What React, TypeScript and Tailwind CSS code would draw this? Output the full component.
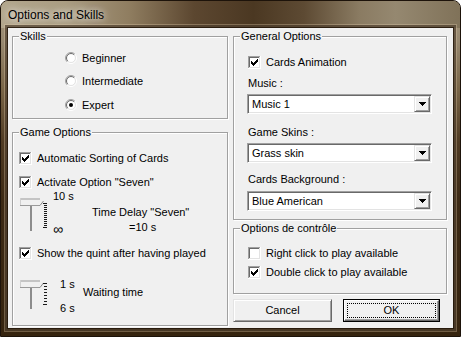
import React from "react";

function Check({ checked }: { checked: boolean }) {
  const offs = [2, 3, 4, 3, 2, 1, 0];
  return (
    <svg width="13" height="13" viewBox="0 0 13 13" shapeRendering="crispEdges" className="shrink-0">
      <rect x="0" y="0" width="13" height="13" fill="#ffffff" />
      <rect x="0" y="0" width="12" height="1" fill="#a0a0a0" />
      <rect x="0" y="0" width="1" height="12" fill="#a0a0a0" />
      <rect x="1" y="1" width="10" height="1" fill="#696969" />
      <rect x="1" y="1" width="1" height="10" fill="#696969" />
      <rect x="1" y="11" width="11" height="1" fill="#e3e3e3" />
      <rect x="11" y="1" width="1" height="11" fill="#e3e3e3" />
      {checked &&
        offs.map((o, i) => <rect key={i} x={3 + i} y={3 + o} width="1" height="3" fill="#000" />)}
    </svg>
  );
}

function Radio({ checked }: { checked: boolean }) {
  const arc = (r: number, c1: string, c2: string) => {
    const d = r * Math.SQRT1_2;
    return (
      <>
        <path d={`M ${6 - d} ${6 + d} A ${r} ${r} 0 0 1 ${6 + d} ${6 - d}`} stroke={c1} fill="none" />
        <path d={`M ${6 + d} ${6 - d} A ${r} ${r} 0 0 1 ${6 - d} ${6 + d}`} stroke={c2} fill="none" />
      </>
    );
  };
  return (
    <svg width="12" height="12" viewBox="0 0 12 12" className="shrink-0">
      <circle cx="6" cy="6" r="4.2" fill="#ffffff" />
      {arc(5.5, "#a0a0a0", "#ffffff")}
      {arc(4.5, "#696969", "#e3e3e3")}
      {checked && <circle cx="6" cy="6" r="2" fill="#000" />}
    </svg>
  );
}

function CheckRow({ label, checked, className = "" }: { label: string; checked: boolean; className?: string }) {
  return (
    <div className={`flex items-center h-[16px] gap-[5px] ${className}`}>
      <Check checked={checked} />
      <span className="whitespace-nowrap">{label}</span>
    </div>
  );
}

function RadioRow({ label, checked, className = "" }: { label: string; checked: boolean; className?: string }) {
  return (
    <div className={`flex items-center h-[16px] gap-[5px] pl-[52px] ${className}`}>
      <Radio checked={checked} />
      <span className="whitespace-nowrap">{label}</span>
    </div>
  );
}

function Combo({ value, className = "" }: { value: string; className?: string }) {
  return (
    <div
      className={`h-[20px] w-[185px] flex items-stretch p-[1px] bg-white border border-[#a0a0a0] border-r-white border-b-white shadow-[inset_1px_1px_0_#696969,inset_-1px_-1px_0_#e3e3e3] ${className}`}
    >
      <span className="flex-1 pl-[3px] flex items-center whitespace-nowrap">{value}</span>
      <div className="w-[16px] flex items-center justify-center bg-[#f0f0f0] border border-[#e3e3e3] border-r-[#696969] border-b-[#696969] shadow-[inset_1px_1px_0_#ffffff,inset_-1px_-1px_0_#a0a0a0]">
        <svg width="7" height="4" viewBox="0 0 7 4" shapeRendering="crispEdges">
          <rect x="0" y="0" width="7" height="1" fill="#000" />
          <rect x="1" y="1" width="5" height="1" fill="#000" />
          <rect x="2" y="2" width="3" height="1" fill="#000" />
          <rect x="3" y="3" width="1" height="1" fill="#000" />
        </svg>
      </div>
    </div>
  );
}

function Slider({
  h,
  thumbTop,
  trackEnd,
  ticks,
}: {
  h: number;
  thumbTop: number;
  trackEnd: number;
  ticks: number[];
}) {
  const t = thumbTop;
  const b = thumbTop + 7;
  return (
    <svg width="36" height={h} viewBox={`0 0 36 ${h}`} shapeRendering="crispEdges" className="shrink-0">
      <rect x="17" y={b} width="2" height={trackEnd - b} fill="#8c8c8c" />
      <rect x="7" y={t} width="20" height="2" fill="#c4c4c4" />
      <rect x="7" y={t} width="1" height="7" fill="#cfcfcf" />
      <rect x="7" y={b} width="20" height="1" fill="#9a9a9a" />
      <line x1="27" y1={b + 0.5} x2="30.5" y2={t + 3} stroke="#8a8a8a" strokeWidth="1" shapeRendering="auto" />
      {ticks.map((y, i) => (
        <rect
          key={i}
          x={i === 0 || i === ticks.length - 1 ? 30 : 31}
          y={y}
          width={i === 0 || i === ticks.length - 1 ? 4 : 3}
          height="1"
          fill="#1a1a1a"
        />
      ))}
    </svg>
  );
}

const range = (a: number, b: number, s: number) => {
  const r: number[] = [];
  for (let v = a; v <= b; v += s) r.push(v);
  return r;
};

const fs =
  "min-w-0 border border-[#a0a0a0] shadow-[inset_1px_1px_0_#ffffff,1px_1px_0_#ffffff]";
const lg = "ml-[6px] px-[1px] bg-[#f0f0f0] leading-[13px]";

function PushButton({ label, isDefault = false, className = "" }: { label: string; isDefault?: boolean; className?: string }) {
  if (isDefault) {
    return (
      <div className={`h-[23px] border border-black flex ${className}`}>
        <div className="flex-1 flex p-[2px] bg-[#f0f0f0] border border-[#ffffff] border-r-[#696969] border-b-[#696969] shadow-[inset_-1px_-1px_0_#a0a0a0]">
          <div className="flex-1 border border-dotted border-black flex items-center justify-center">{label}</div>
        </div>
      </div>
    );
  }
  return (
    <div
      className={`h-[23px] flex items-center justify-center bg-[#f0f0f0] border border-[#e3e3e3] border-r-[#696969] border-b-[#696969] shadow-[inset_1px_1px_0_#ffffff,inset_-1px_-1px_0_#a0a0a0] ${className}`}
    >
      {label}
    </div>
  );
}

export default function App() {
  return (
    <div className="w-[461px] h-[337px] font-['Liberation_Sans',Arial,sans-serif] text-[11px] leading-[13px] text-black">
      <div className="w-full h-full flex flex-col rounded-t-[8px] border border-[#1d130a] overflow-hidden bg-[linear-gradient(180deg,#a5977c_0%,#978870_12%,#7a6648_26%,#503b23_42%,#3d2a15_60%,#36240f_100%)]">
        <div className="h-[27px] shrink-0 flex items-center pl-[7px] bg-[linear-gradient(90deg,#b3a78e_0%,#aa9d82_14%,#8f7d60_28%,#5c4730_42%,#4b3822_55%,#5d4a33_66%,#8a7b62_78%,#958870_86%,#807259_100%)]">
          <span className="text-[12px] leading-[15px] pt-[1px] [text-shadow:0_0_6px_rgba(255,255,255,0.9),0_0_12px_rgba(255,255,255,0.6)]">
            Options and Skills
          </span>
        </div>
        <div className="flex-1 mx-[7px] mb-[8px] bg-[#f0f0f0] shadow-[0_0_0_1px_rgba(30,18,6,0.75),0_0_0_3px_rgba(40,26,12,0.55),0_0_0_4px_rgba(220,200,170,0.35)] flex gap-[5px] pl-[4px] pr-[6px] pt-[2px]">
          {/* Left column */}
          <div className="w-[216px] flex flex-col gap-[7px]">
            <fieldset className={`${fs} h-[89px]`}>
              <legend className={lg}>Skills</legend>
              <RadioRow className="mt-[7px]" label="Beginner" checked={false} />
              <RadioRow className="mt-[7px]" label="Intermediate" checked={false} />
              <RadioRow className="mt-[8px]" label="Expert" checked={true} />
            </fieldset>
            <fieldset className={`${fs} h-[200px]`}>
              <legend className={lg}>Game Options</legend>
              <div className="pl-[6px]">
                <CheckRow className="mt-[11px]" label="Automatic Sorting of Cards" checked />
                <CheckRow className="mt-[8px]" label='Activate Option "Seven"' checked />
              </div>
              <div className="flex h-[46px]">
                <Slider h={46} thumbTop={8} trackEnd={41} ticks={range(13, 37, 2)} />
                <div className="ml-[4px] w-[39px] h-[46px] flex flex-col justify-between">
                  <span>10 s</span>
                  <span className="text-[14px] leading-[13px] tracking-[-1px]">∞</span>
                </div>
                <div className="flex flex-col items-center">
                  <span className="mt-[16px] whitespace-nowrap">Time Delay "Seven"</span>
                  <span className="mt-[2px] pl-[4px]">=10 s</span>
                </div>
              </div>
              <div className="pl-[6px]">
                <CheckRow className="mt-[9px]" label="Show the quint after having played" checked />
              </div>
              <div className="flex h-[37px] mt-[17px]">
                <Slider h={37} thumbTop={2} trackEnd={31} ticks={range(5, 26, 3)} />
                <div className="ml-[11px] w-[23px] h-[37px] flex flex-col justify-between">
                  <span>1 s</span>
                  <span>6 s</span>
                </div>
                <span className="mt-[8px] whitespace-nowrap">Waiting time</span>
              </div>
            </fieldset>
          </div>
          {/* Right column */}
          <div className="w-[214px] flex flex-col">
            <fieldset className={`${fs} h-[190px]`}>
              <legend className={lg}>General Options</legend>
              <div className="pl-[13px] flex flex-col">
                <CheckRow className="mt-[11px] pl-[1px]" label="Cards Animation" checked />
                <span className="mt-[7px] pl-[1px]">Music :</span>
                <Combo className="mt-[4px]" value="Music 1" />
                <span className="mt-[12px] pl-[1px]">Game Skins :</span>
                <Combo className="mt-[4px]" value="Grass skin" />
                <span className="mt-[10px] pl-[1px]">Cards Background :</span>
                <Combo className="mt-[5px]" value="Blue American" />
              </div>
            </fieldset>
            <fieldset className={`${fs} h-[72px] mt-[2px]`}>
              <legend className={lg}>Options de contrôle</legend>
              <div className="pl-[14px]">
                <CheckRow className="mt-[10px]" label="Right click to play available" checked={false} />
                <CheckRow className="mt-[3px]" label="Double click to play available" checked />
              </div>
            </fieldset>
            <div className="flex mt-[5px] gap-[11px]">
              <PushButton className="w-[99px]" label="Cancel" />
              <PushButton className="w-[97px]" label="OK" isDefault />
            </div>
          </div>
        </div>
      </div>
    </div>
  );
}
